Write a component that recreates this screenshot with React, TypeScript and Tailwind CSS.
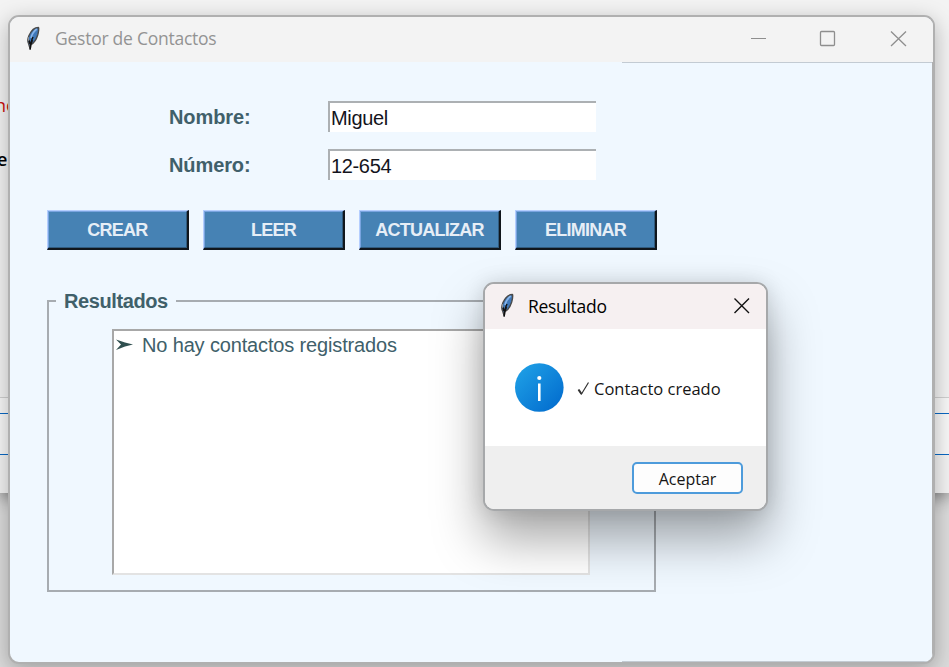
import React from 'react';

const Feather = () => (
  <svg width="16" height="26" viewBox="0 0 16 26" className="mb-[3px] shrink-0">
    <path d="M13.500 2.500C9.500 2.500 6 6 4 10.500C2.500 14 2.500 17 3.700 19L5.200 24L6 19.500C9 18 11.500 14 12.700 10C13.500 7 14 4 13.500 2.500Z" fill="#4078b8" stroke="#4a4a4a" strokeWidth="1.400" strokeLinejoin="round" />
    <path d="M11.800 4C9 6 7 9 6 13" fill="none" stroke="#86b4ea" strokeWidth="1.600" />
    <path d="M8 12C6.500 15 5.500 19 5.200 24.500M4 15L5 19M7.500 15L6 19" fill="none" stroke="#111" strokeWidth="1.500" />
    <path d="M3.200 12L3.800 16" stroke="#aaa" strokeWidth="0.800" />
  </svg>
);

const Field = ({ label, value }: { label: string; value: string }) => (
  <div className="flex h-[31px]">
    <div className="w-[159px] text-[20px] leading-[32px] font-bold tracking-[-0.1px] text-[#40606a]">{label}</div>
    <div className="h-[31px] w-[268px] border-t-2 border-l-2 border-[#acb0b3] bg-white pl-px text-[20px] leading-[30px] tracking-[-0.35px] text-[#14141c]">
      {value}
    </div>
  </div>
);

const Action = ({ children }: { children: string }) => (
  <div className="h-[40px] w-[142px] border-t border-r-2 border-b-2 border-l border-t-[#b4ceff] border-r-[#10161c] border-b-[#10161c] border-l-[#b4ceff]">
    <div className="flex h-full items-center justify-center border border-t-[#79a4df] border-r-[#315b7e] border-b-[#315b7e] border-l-[#79a4df] bg-[#4682b4] text-[18px] leading-none font-bold tracking-[-0.75px] text-[#e6eef6]">
      {children}
    </div>
  </div>
);

export default function App() {
  return (
    <div className="relative h-[667px] w-[949px] overflow-hidden bg-[#dcdcdc] font-['Liberation_Sans',Arial,sans-serif]">
      <div className="flex h-[493px] flex-col bg-[#f3f3f3] shadow-[0_4px_16px_rgba(0,0,0,0.45)]">
        <div className="h-[397px] pt-[94px] font-['Open_Sans',sans-serif] text-[18px] leading-[22px]">
          <div className="ml-[-5px] font-medium text-[#cc1010]">no</div>
          <div className="mt-[32px] ml-[-3px] font-semibold text-black">e</div>
        </div>
        <div className="h-[16px] border-t border-[#d0d0d0] bg-[#f8f8f8]" />
        <div className="h-px bg-[#0a68c4]" />
        <div className="h-[40px] bg-[#f8f8f8]" />
        <div className="h-px bg-[#0a68c4]" />
      </div>

      <div className="absolute top-[15px] left-[8px] flex h-[649px] w-[927px] flex-col overflow-hidden rounded-[11px] border-2 border-[#b0b0b0] bg-[#f0f8ff] shadow-[0_6px_22px_rgba(0,0,0,0.28)]">
        <div className="flex h-[45px] shrink-0 items-center bg-[#f3f3f3] pl-[15px]">
          <Feather />
          <div className="mb-[2px] ml-[14px] flex-1 font-['Open_Sans',sans-serif] text-[17.5px] tracking-[-0.25px] whitespace-nowrap text-[#939393]">Gestor de Contactos</div>
          <svg width="190" height="45" viewBox="0 0 190 45" fill="none" stroke="#8e8e8e" className="shrink-0">
            <path d="M8 21.500H23" />
            <rect x="77.500" y="14.500" width="14" height="14" rx="1" strokeWidth="1.300" />
            <path d="M148 14.500L163 29M163 14.500L148 29" strokeWidth="1.300" />
          </svg>
        </div>
        <div className="flex min-h-0 flex-1 flex-col border-r border-[#b0b0b0]">
          <div className="flex h-px shrink-0 justify-end"><div className="w-[310px] bg-[#c3cbd3]" /></div>
          <div className="mt-[38px] ml-[159px] flex flex-col gap-[17px]">
            <Field label="Nombre:" value="Miguel" />
            <Field label="Número:" value="12-654" />
          </div>
          <div className="mt-[30px] ml-[37px] flex gap-[14px]">
            <Action>CREAR</Action>
            <Action>LEER</Action>
            <Action>ACTUALIZAR</Action>
            <Action>ELIMINAR</Action>
          </div>
          <fieldset className="mt-[38px] ml-[37px] h-[304px] w-[609px] border-2 border-[#a7acb1] pl-[63px]">
            <legend className="ml-[-56px] px-[8px] text-[20px] leading-[26px] font-bold tracking-[-0.4px] text-[#40606a]">Resultados</legend>
            <div className="mt-[15px] flex h-[246px] w-[478px] items-start border-2 border-t-[#a8a8a8] border-r-[#e3e3e3] border-b-[#e3e3e3] border-l-[#a8a8a8] bg-white pl-[2px] text-[20px] leading-[28px] tracking-[-0.15px] text-[#40606a]">
              <svg width="18" height="28" viewBox="0 0 18 28" className="mr-[8px] shrink-0">
                <path d="M0 8.500L9 11.500L17 13.500L9 15.500L0 19L5 13.500Z" fill="#2f4f4f" />
                <path d="M0 10.500L4 13.500L0 17" fill="#fff" />
              </svg>
              No hay contactos registrados
            </div>
          </fieldset>
          <div className="mt-auto flex h-px shrink-0 justify-end"><div className="w-[310px] bg-[#c3cbd3]" /></div>
        </div>
      </div>

      <div className="absolute top-[282px] left-[483px] flex h-[229px] w-[285px] flex-col overflow-hidden rounded-[11px] border-2 border-[#a6a8aa] bg-white font-['Open_Sans',sans-serif] shadow-[0_28px_50px_rgba(0,0,0,0.35),0_0_20px_rgba(0,0,0,0.12)]">
        <div className="flex h-[45px] shrink-0 items-center bg-[#f6f0f1] pl-[14px]">
          <Feather />
          <div className="mb-[1px] ml-[13px] flex-1 text-[17.5px] tracking-[-0.3px] text-black">Resultado</div>
          <svg width="16" height="16" viewBox="0 0 16 16" stroke="#111" strokeWidth="1.400" className="mr-[16px] mb-[2px]">
            <path d="M0.500 0.500L15 15M15 0.500L0.500 15" />
          </svg>
        </div>
        <div className="flex h-[117px] shrink-0 items-center pl-[29px]">
          <svg width="50" height="50" viewBox="0 0 50 50">
            <defs><linearGradient id="info" x1="0" y1="0" x2="1" y2="1"><stop stopColor="#21a4e8" /><stop offset="1" stopColor="#0068cc" /></linearGradient></defs>
            <circle cx="25.300" cy="24.500" r="24.300" fill="url(#info)" />
            <circle cx="25.300" cy="15" r="2.100" fill="#fff" />
            <path d="M25.300 20.500V38" stroke="#fff" strokeWidth="2.600" />
          </svg>
          <svg width="14" height="16" viewBox="0 0 14 16" className="mt-[2px] ml-[13px]" fill="none" stroke="#333">
            <path d="M1.500 9L4.500 13L11.500 1.500" strokeWidth="1.200" /><path d="M1.500 8.500L4.500 13" strokeWidth="2" />
          </svg>
          <div className="mt-[3px] ml-[3px] text-[16.5px] leading-none font-medium whitespace-nowrap text-[#151515]">Contacto creado</div>
        </div>
        <div className="flex flex-1 items-start justify-end bg-[#efefef] pt-[16px] pr-[23px]">
          <div className="flex h-[32px] w-[111px] items-center justify-center rounded-[5px] border-2 border-[#4d9bdb] bg-[#fdfdfd] pt-[2px] text-[16px] leading-none font-medium text-[#151515]">Aceptar</div>
        </div>
      </div>
    </div>
  );
}
